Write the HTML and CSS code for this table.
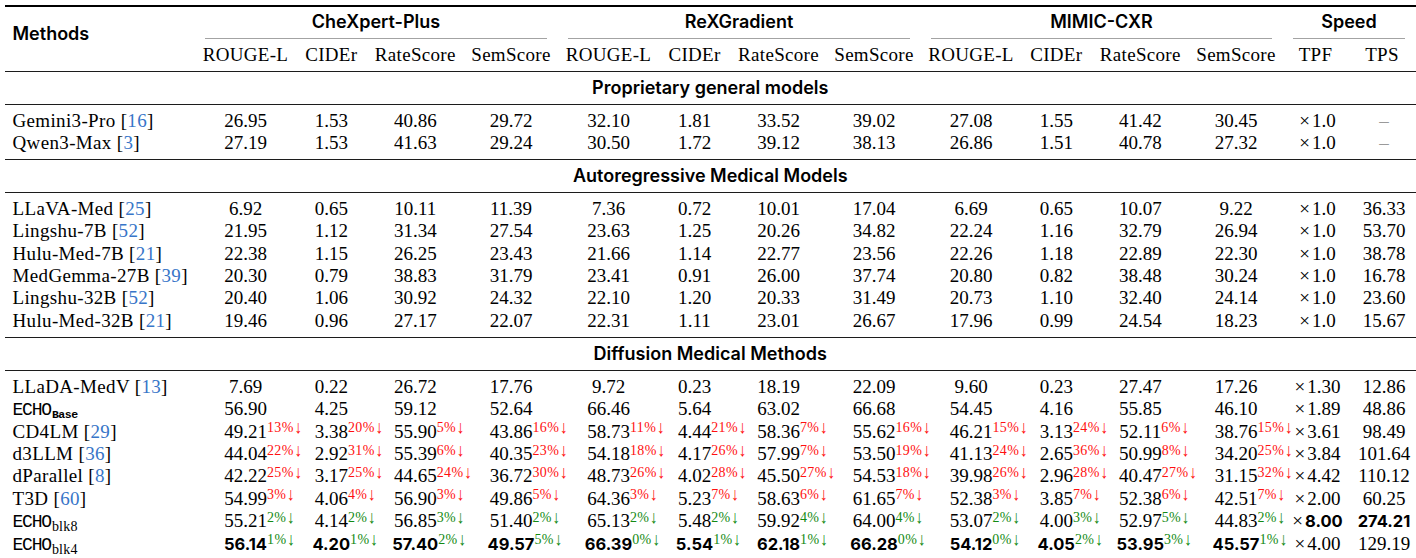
FILE: index.html
```html
<!DOCTYPE html>
<html lang="en">
<head>
<meta charset="utf-8">
<title>Results table</title>
<link rel="stylesheet" href="styles.css">
</head>
<body>
<div class="tbl">
  <div class="rule top"></div>

  <div class="hd-methods">Methods</div>
  <div class="grp s4">CheXpert-Plus</div>
  <div class="grp s4">ReXGradient</div>
  <div class="grp s4">MIMIC-CXR</div>
  <div class="grp s2">Speed</div>

  <div class="cmid s4"></div>
  <div class="cmid s4"></div>
  <div class="cmid s4"></div>
  <div class="cmid s2"></div>

  <div class="c h">ROUGE-L</div><div class="c h">CIDEr</div><div class="c h">RateScore</div><div class="c h">SemScore</div>
  <div class="c h">ROUGE-L</div><div class="c h">CIDEr</div><div class="c h">RateScore</div><div class="c h">SemScore</div>
  <div class="c h">ROUGE-L</div><div class="c h">CIDEr</div><div class="c h">RateScore</div><div class="c h">SemScore</div>
  <div class="c h">TPF</div><div class="c h">TPS</div>

  <div class="rule"></div>
  <div class="sec">Proprietary general models</div>
  <div class="rule"></div>

  <div class="m">Gemini3-Pro [<span class="cite">16</span>]</div>
  <div class="c">26.95</div><div class="c">1.53</div><div class="c">40.86</div><div class="c">29.72</div>
  <div class="c">32.10</div><div class="c">1.81</div><div class="c">33.52</div><div class="c">39.02</div>
  <div class="c">27.08</div><div class="c">1.55</div><div class="c">41.42</div><div class="c">30.45</div>
  <div class="c sp"><span class="x">×</span>1.0</div><div class="c sp"><span class="dash">–</span></div>

  <div class="m">Qwen3-Max [<span class="cite">3</span>]</div>
  <div class="c">27.19</div><div class="c">1.53</div><div class="c">41.63</div><div class="c">29.24</div>
  <div class="c">30.50</div><div class="c">1.72</div><div class="c">39.12</div><div class="c">38.13</div>
  <div class="c">26.86</div><div class="c">1.51</div><div class="c">40.78</div><div class="c">27.32</div>
  <div class="c sp"><span class="x">×</span>1.0</div><div class="c sp"><span class="dash">–</span></div>

  <div class="rule"></div>
  <div class="sec">Autoregressive Medical Models</div>
  <div class="rule"></div>

  <div class="m">LLaVA-Med [<span class="cite">25</span>]</div>
  <div class="c">6.92</div><div class="c">0.65</div><div class="c">10.11</div><div class="c">11.39</div>
  <div class="c">7.36</div><div class="c">0.72</div><div class="c">10.01</div><div class="c">17.04</div>
  <div class="c">6.69</div><div class="c">0.65</div><div class="c">10.07</div><div class="c">9.22</div>
  <div class="c sp"><span class="x">×</span>1.0</div><div class="c sp">36.33</div>

  <div class="m">Lingshu-7B [<span class="cite">52</span>]</div>
  <div class="c">21.95</div><div class="c">1.12</div><div class="c">31.34</div><div class="c">27.54</div>
  <div class="c">23.63</div><div class="c">1.25</div><div class="c">20.26</div><div class="c">34.82</div>
  <div class="c">22.24</div><div class="c">1.16</div><div class="c">32.79</div><div class="c">26.94</div>
  <div class="c sp"><span class="x">×</span>1.0</div><div class="c sp">53.70</div>

  <div class="m">Hulu-Med-7B [<span class="cite">21</span>]</div>
  <div class="c">22.38</div><div class="c">1.15</div><div class="c">26.25</div><div class="c">23.43</div>
  <div class="c">21.66</div><div class="c">1.14</div><div class="c">22.77</div><div class="c">23.56</div>
  <div class="c">22.26</div><div class="c">1.18</div><div class="c">22.89</div><div class="c">22.30</div>
  <div class="c sp"><span class="x">×</span>1.0</div><div class="c sp">38.78</div>

  <div class="m">MedGemma-27B [<span class="cite">39</span>]</div>
  <div class="c">20.30</div><div class="c">0.79</div><div class="c">38.83</div><div class="c">31.79</div>
  <div class="c">23.41</div><div class="c">0.91</div><div class="c">26.00</div><div class="c">37.74</div>
  <div class="c">20.80</div><div class="c">0.82</div><div class="c">38.48</div><div class="c">30.24</div>
  <div class="c sp"><span class="x">×</span>1.0</div><div class="c sp">16.78</div>

  <div class="m">Lingshu-32B [<span class="cite">52</span>]</div>
  <div class="c">20.40</div><div class="c">1.06</div><div class="c">30.92</div><div class="c">24.32</div>
  <div class="c">22.10</div><div class="c">1.20</div><div class="c">20.33</div><div class="c">31.49</div>
  <div class="c">20.73</div><div class="c">1.10</div><div class="c">32.40</div><div class="c">24.14</div>
  <div class="c sp"><span class="x">×</span>1.0</div><div class="c sp">23.60</div>

  <div class="m">Hulu-Med-32B [<span class="cite">21</span>]</div>
  <div class="c">19.46</div><div class="c">0.96</div><div class="c">27.17</div><div class="c">22.07</div>
  <div class="c">22.31</div><div class="c">1.11</div><div class="c">23.01</div><div class="c">26.67</div>
  <div class="c">17.96</div><div class="c">0.99</div><div class="c">24.54</div><div class="c">18.23</div>
  <div class="c sp"><span class="x">×</span>1.0</div><div class="c sp">15.67</div>

  <div class="rule"></div>
  <div class="sec">Diffusion Medical Methods</div>
  <div class="rule"></div>

  <div class="m">LLaDA-MedV [<span class="cite">13</span>]</div>
  <div class="c">7.69</div><div class="c">0.22</div><div class="c">26.72</div><div class="c">17.76</div>
  <div class="c">9.72</div><div class="c">0.23</div><div class="c">18.19</div><div class="c">22.09</div>
  <div class="c">9.60</div><div class="c">0.23</div><div class="c">27.47</div><div class="c">17.26</div>
  <div class="c sp"><span class="x">×</span>1.30</div><div class="c sp">12.86</div>

  <div class="m"><span class="tt">ECHO</span><sub class="sub-tt">Base</sub></div>
  <div class="c">56.90</div><div class="c">4.25</div><div class="c">59.12</div><div class="c">52.64</div>
  <div class="c">66.46</div><div class="c">5.64</div><div class="c">63.02</div><div class="c">66.68</div>
  <div class="c">54.45</div><div class="c">4.16</div><div class="c">55.85</div><div class="c">46.10</div>
  <div class="c sp"><span class="x">×</span>1.89</div><div class="c sp">48.86</div>

  <div class="m">CD4LM [<span class="cite">29</span>]</div>
  <div class="c">49.21<span class="d r">13%<span class="ar">↓</span></span></div><div class="c">3.38<span class="d r">20%<span class="ar">↓</span></span></div><div class="c">55.90<span class="d r">5%<span class="ar">↓</span></span></div><div class="c">43.86<span class="d r">16%<span class="ar">↓</span></span></div>
  <div class="c">58.73<span class="d r">11%<span class="ar">↓</span></span></div><div class="c">4.44<span class="d r">21%<span class="ar">↓</span></span></div><div class="c">58.36<span class="d r">7%<span class="ar">↓</span></span></div><div class="c">55.62<span class="d r">16%<span class="ar">↓</span></span></div>
  <div class="c">46.21<span class="d r">15%<span class="ar">↓</span></span></div><div class="c">3.13<span class="d r">24%<span class="ar">↓</span></span></div><div class="c">52.11<span class="d r">6%<span class="ar">↓</span></span></div><div class="c">38.76<span class="d r">15%<span class="ar">↓</span></span></div>
  <div class="c sp"><span class="x">×</span>3.61</div><div class="c sp">98.49</div>

  <div class="m">d3LLM [<span class="cite">36</span>]</div>
  <div class="c">44.04<span class="d r">22%<span class="ar">↓</span></span></div><div class="c">2.92<span class="d r">31%<span class="ar">↓</span></span></div><div class="c">55.39<span class="d r">6%<span class="ar">↓</span></span></div><div class="c">40.35<span class="d r">23%<span class="ar">↓</span></span></div>
  <div class="c">54.18<span class="d r">18%<span class="ar">↓</span></span></div><div class="c">4.17<span class="d r">26%<span class="ar">↓</span></span></div><div class="c">57.99<span class="d r">7%<span class="ar">↓</span></span></div><div class="c">53.50<span class="d r">19%<span class="ar">↓</span></span></div>
  <div class="c">41.13<span class="d r">24%<span class="ar">↓</span></span></div><div class="c">2.65<span class="d r">36%<span class="ar">↓</span></span></div><div class="c">50.99<span class="d r">8%<span class="ar">↓</span></span></div><div class="c">34.20<span class="d r">25%<span class="ar">↓</span></span></div>
  <div class="c sp"><span class="x">×</span>3.84</div><div class="c sp">101.64</div>

  <div class="m">dParallel [<span class="cite">8</span>]</div>
  <div class="c">42.22<span class="d r">25%<span class="ar">↓</span></span></div><div class="c">3.17<span class="d r">25%<span class="ar">↓</span></span></div><div class="c">44.65<span class="d r">24%<span class="ar">↓</span></span></div><div class="c">36.72<span class="d r">30%<span class="ar">↓</span></span></div>
  <div class="c">48.73<span class="d r">26%<span class="ar">↓</span></span></div><div class="c">4.02<span class="d r">28%<span class="ar">↓</span></span></div><div class="c">45.50<span class="d r">27%<span class="ar">↓</span></span></div><div class="c">54.53<span class="d r">18%<span class="ar">↓</span></span></div>
  <div class="c">39.98<span class="d r">26%<span class="ar">↓</span></span></div><div class="c">2.96<span class="d r">28%<span class="ar">↓</span></span></div><div class="c">40.47<span class="d r">27%<span class="ar">↓</span></span></div><div class="c">31.15<span class="d r">32%<span class="ar">↓</span></span></div>
  <div class="c sp"><span class="x">×</span>4.42</div><div class="c sp">110.12</div>

  <div class="m">T3D [<span class="cite">60</span>]</div>
  <div class="c">54.99<span class="d r">3%<span class="ar">↓</span></span></div><div class="c">4.06<span class="d r">4%<span class="ar">↓</span></span></div><div class="c">56.90<span class="d r">3%<span class="ar">↓</span></span></div><div class="c">49.86<span class="d r">5%<span class="ar">↓</span></span></div>
  <div class="c">64.36<span class="d r">3%<span class="ar">↓</span></span></div><div class="c">5.23<span class="d r">7%<span class="ar">↓</span></span></div><div class="c">58.63<span class="d r">6%<span class="ar">↓</span></span></div><div class="c">61.65<span class="d r">7%<span class="ar">↓</span></span></div>
  <div class="c">52.38<span class="d r">3%<span class="ar">↓</span></span></div><div class="c">3.85<span class="d r">7%<span class="ar">↓</span></span></div><div class="c">52.38<span class="d r">6%<span class="ar">↓</span></span></div><div class="c">42.51<span class="d r">7%<span class="ar">↓</span></span></div>
  <div class="c sp"><span class="x">×</span>2.00</div><div class="c sp">60.25</div>

  <div class="m"><span class="tt">ECHO</span><sub class="sub-rm">blk8</sub></div>
  <div class="c">55.21<span class="d g">2%<span class="ar">↓</span></span></div><div class="c">4.14<span class="d g">2%<span class="ar">↓</span></span></div><div class="c">56.85<span class="d g">3%<span class="ar">↓</span></span></div><div class="c">51.40<span class="d g">2%<span class="ar">↓</span></span></div>
  <div class="c">65.13<span class="d g">2%<span class="ar">↓</span></span></div><div class="c">5.48<span class="d g">2%<span class="ar">↓</span></span></div><div class="c">59.92<span class="d g">4%<span class="ar">↓</span></span></div><div class="c">64.00<span class="d g">4%<span class="ar">↓</span></span></div>
  <div class="c">53.07<span class="d g">2%<span class="ar">↓</span></span></div><div class="c">4.00<span class="d g">3%<span class="ar">↓</span></span></div><div class="c">52.97<span class="d g">5%<span class="ar">↓</span></span></div><div class="c">44.83<span class="d g">2%<span class="ar">↓</span></span></div>
  <div class="c sp"><span class="x">×</span><span class="b">8.00</span></div><div class="c sp"><span class="b">274.21</span></div>

  <div class="m"><span class="tt">ECHO</span><sub class="sub-rm">blk4</sub></div>
  <div class="c"><span class="b">56.14</span><span class="d g">1%<span class="ar">↓</span></span></div><div class="c"><span class="b">4.20</span><span class="d g">1%<span class="ar">↓</span></span></div><div class="c"><span class="b">57.40</span><span class="d g">2%<span class="ar">↓</span></span></div><div class="c"><span class="b">49.57</span><span class="d g">5%<span class="ar">↓</span></span></div>
  <div class="c"><span class="b">66.39</span><span class="d g">0%<span class="ar">↓</span></span></div><div class="c"><span class="b">5.54</span><span class="d g">1%<span class="ar">↓</span></span></div><div class="c"><span class="b">62.18</span><span class="d g">1%<span class="ar">↓</span></span></div><div class="c"><span class="b">66.28</span><span class="d g">0%<span class="ar">↓</span></span></div>
  <div class="c"><span class="b">54.12</span><span class="d g">0%<span class="ar">↓</span></span></div><div class="c"><span class="b">4.05</span><span class="d g">2%<span class="ar">↓</span></span></div><div class="c"><span class="b">53.95</span><span class="d g">3%<span class="ar">↓</span></span></div><div class="c"><span class="b">45.57</span><span class="d g">1%<span class="ar">↓</span></span></div>
  <div class="c sp"><span class="x">×</span>4.00</div><div class="c sp">129.19</div>

  <div class="rule"></div>
</div>
</body>
</html>
```

FILE: styles.css
```css
html, body {
  margin: 0;
  padding: 0;
  background: #ffffff;
}

body {
  padding-top: 5px;
  color: #000;
  font-family: "Liberation Serif", "Times New Roman", serif;
  font-size: 19px;
}

.tbl {
  margin-left: 5px;
  width: 1410.5px;
  display: grid;
  grid-template-columns: 189.5px 102px 69.5px 98.5px 93px 102px 70px 98px 93px 101px 69.5px 98.5px 93px 66px 67px;
}

.rule {
  grid-column: 1 / -1;
  border-top: 1px solid #1c1c1c;
  margin: 4.8px 0;
}

.rule.top {
  border-top: 2px solid #000;
  margin: 0 0 4px;
}

.hd-methods {
  grid-row: span 3;
  align-self: center;
  padding: 0 0 8px 7.5px;
  font-family: "Inter", "Liberation Sans", sans-serif;
  font-weight: 600;
  font-size: 18px;
  line-height: 22.4px;
}

.s4 { grid-column: span 4; }
.s2 { grid-column: span 2; }

.grp {
  text-align: center;
  font-family: "Inter", "Liberation Sans", sans-serif;
  font-weight: 600;
  font-size: 18px;
  line-height: 22.4px;
  height: 22.4px;
}

.cmid {
  border-top: 1px solid #a3a3a3;
  margin: 4.8px 10.5px 4.4px;
}

.sec {
  grid-column: 1 / -1;
  text-align: center;
  font-family: "Inter", "Liberation Sans", sans-serif;
  font-weight: 600;
  font-size: 18px;
  line-height: 22.4px;
  height: 22.4px;
}

.c, .m {
  line-height: 22.4px;
  height: 22.4px;
  white-space: nowrap;
}

.c {
  text-align: center;
}

.c.h {
  letter-spacing: 0.3px;
}

.c.sp {
  padding-left: 4px;
}

.m {
  padding-left: 7.5px;
  letter-spacing: 0.35px;
}

.cite {
  color: #3775c8;
}

.x {
  margin-right: 2px;
}

.dash {
  color: #9a9a9a;
}

.tt {
  font-family: "Liberation Mono", "DejaVu Sans Mono", monospace;
  font-size: 18px;
  letter-spacing: -1.2px;
}

.sub-tt {
  font-family: "Liberation Mono", "DejaVu Sans Mono", monospace;
  font-size: 11.5px;
  font-weight: 700;
  letter-spacing: -0.5px;
  margin-left: 1px;
  vertical-align: -3px;
  line-height: 0;
}

.sub-rm {
  font-size: 14px;
  letter-spacing: 0.2px;
  margin-left: 1px;
  vertical-align: -4px;
  line-height: 0;
}

.d {
  display: inline-block;
  width: 0;
  white-space: nowrap;
  font-size: 14px;
  letter-spacing: 0.4px;
  line-height: 0;
  vertical-align: 5.5px;
}

.ar {
  display: inline-block;
  font-size: 16px;
  margin-left: 0.5px;
  transform: scaleY(1.15);
}

.d.r { color: #ff1010; }
.d.g { color: #138a13; }

.b {
  font-family: "Inter", "Liberation Sans", sans-serif;
  font-weight: 700;
  font-size: 16.5px;
  letter-spacing: 0;
}
```
